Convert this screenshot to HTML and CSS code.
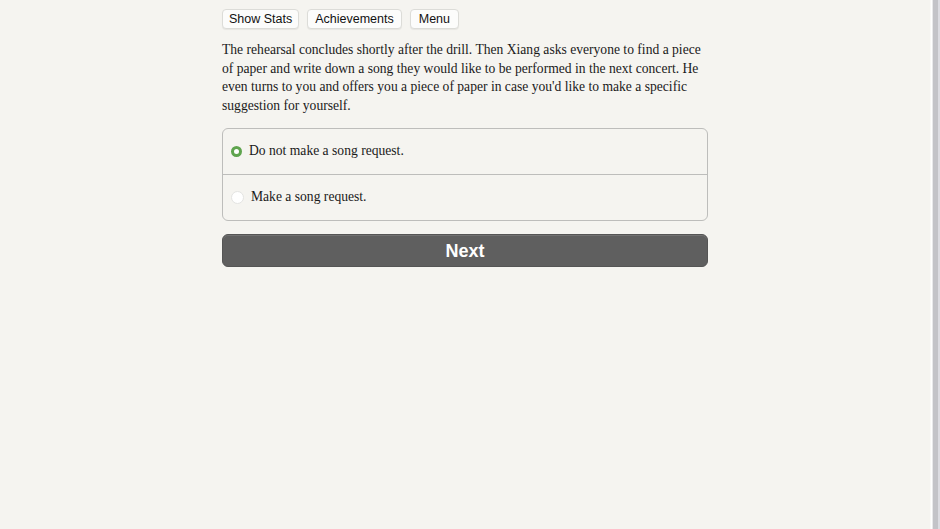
FILE: index.html
```html
<!DOCTYPE html>
<html>
<head>
<meta charset="utf-8">
<link rel="stylesheet" href="styles.css">
</head>
<body>
<div class="page">
  <main class="main">
    <div class="column">
      <nav class="toolbar">
        <button class="tool-btn">Show Stats</button>
        <button class="tool-btn">Achievements</button>
        <button class="tool-btn">Menu</button>
      </nav>
      <p class="story">The rehearsal concludes shortly after the drill. Then Xiang asks everyone to find a piece of paper and write down a song they would like to be performed in the next concert. He even turns to you and offers you a piece of paper in case you'd like to make a specific suggestion for yourself.</p>
      <div class="choices">
        <label class="choice">
          <span class="radio radio-on"></span>
          <span class="choice-text">Do not make a song request.</span>
        </label>
        <label class="choice">
          <span class="radio"></span>
          <span class="choice-text">Make a song request.</span>
        </label>
      </div>
      <button class="next-btn">Next</button>
    </div>
  </main>
  <div class="edge"></div>
</div>
</body>
</html>
```
FILE: styles.css
```css
html, body {
  margin: 0;
  padding: 0;
  background: #f5f4f0;
}
.page {
  display: flex;
  min-height: 100vh;
}
.main {
  flex: 1;
}
.edge {
  width: 10px;
  background: linear-gradient(to right, #f5f4f0 0, #ffffff 1px, #ffffff 2px, #e8e8ea 2px, #e8e8ea 3px, #c3c3c8 3px, #c3c3c8 8px, #dcdce2 8px);
}
.column {
  width: 486px;
  margin-left: 222px;
  padding-top: 9px;
}
.toolbar {
  display: flex;
  gap: 8px;
}
.tool-btn {
  font-family: "Liberation Sans", Arial, sans-serif;
  font-size: 12.5px;
  color: #111;
  background: #fcfcfb;
  border: 1px solid #dcdcd8;
  border-radius: 4px;
  height: 20px;
  padding: 0 7px;
  box-shadow: 0 1px 1px rgba(0,0,0,0.06);
  line-height: 18px;
}
.tool-btn:first-child {
  padding: 0 6px;
}
.tool-btn:last-child {
  padding: 0 8px;
}
.story {
  font-family: "Liberation Serif", "DejaVu Serif", serif;
  font-size: 13.6px;
  line-height: 18.7px;
  color: #1a1a1a;
  margin: 12px 0 12px 0;
}
.choices {
  border: 1px solid #bdbdbb;
  border-radius: 6px;
  overflow: hidden;
}
.choice {
  display: flex;
  align-items: center;
  gap: 7px;
  height: 45px;
  padding-left: 8px;
}
.choice + .choice {
  border-top: 1px solid #bdbdbb;
}
.choice-text {
  font-family: "Liberation Serif", "DejaVu Serif", serif;
  font-size: 13.6px;
  color: #1a1a1a;
}
.radio {
  width: 11px;
  height: 11px;
  border-radius: 50%;
  background: #fff;
  border: 1px solid #e4e4e2;
  box-sizing: content-box;
}
.radio-on {
  background: #fff;
  border: 3px solid #5fa44e;
  width: 5px;
  height: 5px;
}
.next-btn {
  display: block;
  width: 100%;
  margin-top: 13px;
  height: 33px;
  background: #5f5f5f;
  border: 1px solid #555;
  border-radius: 6px;
  color: #fff;
  font-family: "Liberation Sans", Arial, sans-serif;
  font-weight: bold;
  font-size: 18px;
  padding-top: 4px;
  box-shadow: inset 0 1px 0 rgba(255,255,255,0.12);
}
```
